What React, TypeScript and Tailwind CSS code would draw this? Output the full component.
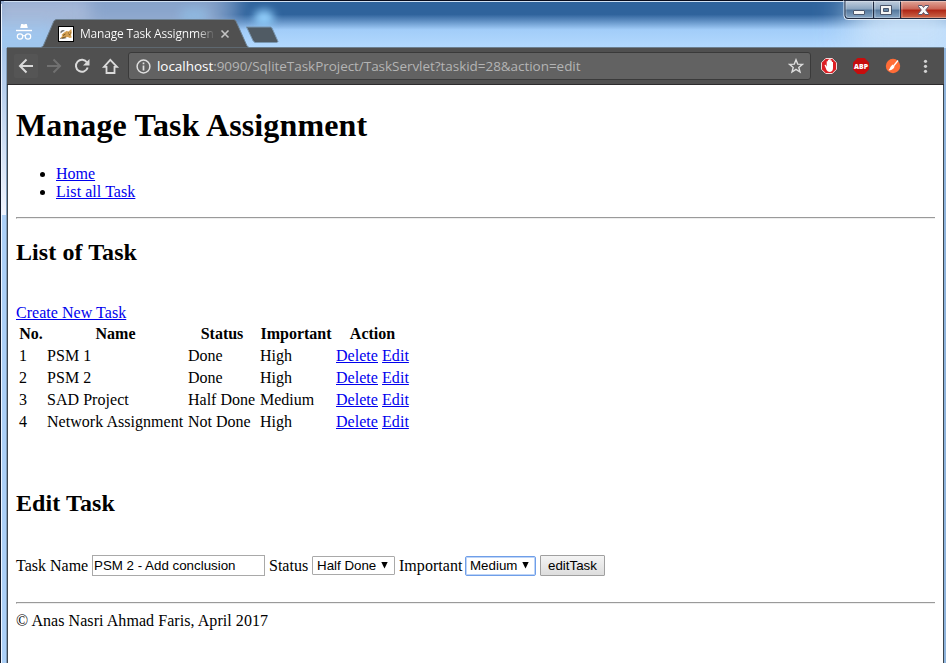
import React from "react";

const tasks = [
  { no: 1, name: "PSM 1", status: "Done", important: "High" },
  { no: 2, name: "PSM 2", status: "Done", important: "High" },
  { no: 3, name: "SAD Project", status: "Half Done", important: "Medium" },
  { no: 4, name: "Network Assignment", status: "Not Done", important: "High" },
];

function Link({ children }: { children: React.ReactNode }) {
  return (
    <a href="#" className="text-[#0000ee] underline decoration-1 underline-offset-1">
      {children}
    </a>
  );
}

function Incognito() {
  return (
    <svg className="mt-[23px] ml-[15px] shrink-0" width="18" height="19" viewBox="0 0 18 19" fill="none" stroke="#fff">
      <path d="M5.2 5 6.2 1h1.5L9 1.500 10.300 1h1.500l1 4z" fill="#fff" stroke="none" />
      <path d="M1 7.500h16" strokeWidth="1.400" />
      <circle cx="5" cy="13.500" r="2.700" strokeWidth="1.200" />
      <circle cx="13" cy="13.500" r="2.700" strokeWidth="1.200" />
      <path d="M7.700 13q1.300-1 2.600 0" strokeWidth="1.100" />
    </svg>
  );
}

function Favicon() {
  return (
    <svg className="absolute left-[17px] top-[7px]" width="16" height="16" viewBox="0 0 16 16">
      <rect x=".5" y=".5" width="15" height="15" fill="#fff" stroke="#000" />
      <path d="M2.500 5.500q1-2 3-1.500l1.500 1-2 .5-2.500 2zM2 12.200h4l3 .8H2z" fill="#777" />
      <path d="m8.500 5 2 .4L13.300 3l.5 3.500-.8 2.500.8 2.500-2 .5-2-1-2.300.4-4 1-1-.9 2-1.500-1-1 2-2z" fill="#d49f50" />
      <path d="M5 9.500 7.500 8M4 12l4-1" stroke="#5c4218" strokeWidth=".8" />
      <path d="M10 7h.8M12 7h.8M10.800 8.700h1.400" stroke="#5c4218" strokeWidth=".8" />
    </svg>
  );
}

function TitleBar() {
  return (
    <div className="relative flex h-12 overflow-hidden bg-linear-to-b from-[#2f639c] from-30% via-[#a2cdf9] via-62% to-[#b3d9fe]">
      <div className="absolute -left-3 -top-3 h-[70px] w-[235px] bg-[#a5b8d8] blur-[10px]" />
      <div className="absolute left-[90px] -top-3 h-9 w-[150px] bg-[#7798c4] opacity-60 blur-[8px]" />
      <div className="absolute -left-4 top-6 h-10 w-[75px] bg-[#9fc6ee] blur-sm" />
      <div className="absolute left-[180px] top-2 h-4 w-7 rounded-full bg-[#8fbbe2] opacity-80 blur-[5px]" />
      <div className="absolute left-[254px] top-[10px] h-4 w-5 rounded-full bg-[#90cdfa] blur-[4px]" />
      <div className="absolute -right-4 -top-2 h-16 w-[110px] bg-[#cfe5fa] opacity-90 blur-[18px]" />
      <div className="absolute inset-x-0 top-0 h-px bg-[#080c1c]" />
      <div className="absolute inset-x-1 top-px h-px bg-[#d0e0f2]" />
      <div className="absolute bottom-0 left-[7px] right-[2px] h-px bg-[#6d8090]" />
      <div className="absolute bottom-0 left-0 top-0 w-px bg-[#10182a]" />
      <div className="absolute bottom-0 left-px top-1 w-px bg-[#eef5ff]" />
      <div className="relative flex">
        <Incognito />
      </div>
      <div className="relative ml-[8px] h-12 w-[207px]">
        <svg className="absolute left-0 top-[19px]" width="238" height="29">
          <path d="M0 28.500 2.200 27 13 1.800 15 .5h178l1.800 1.300L206 27l2 1.500V29H0z" fill="#505050" stroke="#6d8090" />
          <path d="M205 8h24.500l1.500 1 6 13.500-1 1H214l-1.800-1.500L206 9z" fill="#505b64" stroke="#7997b1" />
        </svg>
        <div className="absolute left-0 top-[19px] h-[29px] w-[207px]">
          <Favicon />
          <span className="absolute left-[39px] top-[6px] whitespace-nowrap bg-linear-to-r from-white from-87% to-[#606060] bg-clip-text font-['Open_Sans','Noto_Sans',sans-serif] text-[12px] leading-[18px] tracking-[-0.18px] text-transparent">
            Manage Task Assignmen
          </span>
          <svg className="absolute left-[179px] top-[10px]" width="10" height="10" viewBox="0 0 10 10" stroke="#c4c4c4" strokeWidth="1.600">
            <path d="m1.500 1.500 7 7m0-7-7 7" />
          </svg>
        </div>
      </div>
      <svg className="absolute right-0 top-0" width="103" height="22" viewBox="0 0 103 22">
        <defs>
          <linearGradient id="glass" x2="0" y2="1">
            <stop offset="0" stopColor="#c0cddd" />
            <stop offset=".45" stopColor="#8ba5c0" />
            <stop offset=".5" stopColor="#54779c" />
            <stop offset="1" stopColor="#8eacca" />
          </linearGradient>
          <linearGradient id="close" x2="0" y2="1">
            <stop offset="0" stopColor="#e0a598" />
            <stop offset=".45" stopColor="#ca6556" />
            <stop offset=".5" stopColor="#ae2414" />
            <stop offset="1" stopColor="#d07050" />
          </linearGradient>
        </defs>
        <path d="M1 0v16q0 3.500 3.500 3.500H103" fill="none" stroke="#e4effa" />
        <path d="M2 1h55v18H5q-3 0-3-3z" fill="url(#glass)" />
        <path d="M57 1h46v18H57z" fill="url(#close)" />
        <path d="M2 0v15.500q0 3 3 3H103M30.500 1v17.500M57.500 1v17.500M1 .5h102" fill="none" stroke="#202a40" />
        <path d="M3 1v14q0 2.500 2.500 2.500H29.500V1.500H32v16h24.500V1.500H59v16h44M3 1.500h100" fill="none" stroke="#fff" strokeOpacity=".3" />
        <rect x="10.500" y="10.500" width="11" height="4" rx=".5" fill="#f5f5f5" stroke="#4b566c" />
        <path d="M37.500 5.500h11v9h-11z" fill="#f5f5f5" stroke="#4b566c" />
        <path d="M40.500 8.500h5v3h-5z" fill="#6688a8" stroke="#4b566c" />
        <path d="M75.500 5.500h3.500l1.500 2 1.500-2h3.500v1l-2.800 3.500 2.800 3.500v1H82l-1.500-2-1.500 2h-3.500v-1l2.800-3.500-2.800-3.500z" fill="#f8f8f8" stroke="#59566c" />
      </svg>
    </div>
  );
}

function Toolbar() {
  return (
    <div className="flex h-[37px] items-center border-b border-[#2d2b2d] bg-[#505050]">
      <div className="flex w-[121px] shrink-0">
        <svg width="121" height="36" viewBox="-1 0 121 36" fill="none" stroke="#dadada" strokeWidth="2">
          <rect x="6" y="6" width="24" height="24" rx="2" fill="#555" stroke="none" />
          <path d="M25 18h-12.500M18.500 11.500l-6.500 6.500 6.500 6.500" />
          <path d="M39 18h12.500M45.500 11.500l6.500 6.500-6.500 6.500" stroke="#717171" />
          <path d="M79 14.500a6 6 0 1 0 .7 5" />
          <path d="M81.500 11v6.500H75z" fill="#dadada" stroke="none" />
          <path d="M96 18.800h2.500v6.200h8v-6.200h2.500l-6.700-7z" strokeWidth="1.800" />
        </svg>
      </div>
      <div className="flex h-7 w-[683px] shrink-0 items-center rounded-[3px] border border-[#3a3a3a] bg-[#626262] pl-[6px] pr-[6px]">
        <svg width="17" height="17" viewBox="0 0 17 17" fill="none" stroke="#dedede">
          <circle cx="8.500" cy="8.500" r="6.400" strokeWidth="1.500" />
          <path d="M8.500 7.500v5M8.500 4.500v1.700" strokeWidth="1.700" />
        </svg>
        <div className="ml-[5px] flex-1 whitespace-nowrap font-['Open_Sans','Noto_Sans',sans-serif] text-[13.500px] leading-5 tracking-[-0.045px] text-[#b4b4b4]">
          <span className="text-white">localhost</span>:9090/SqliteTaskProject/TaskServlet?taskid=28&amp;action=edit
        </div>
        <svg width="16" height="16" viewBox="0 0 16 16" fill="none" stroke="#dedede" strokeWidth="1.400">
          <path d="m8 1.800 1.700 4.300 4.700.3-3.600 3 1.200 4.600-4-2.600L4 14l1.200-4.600-3.600-3 4.700-.3z" />
        </svg>
      </div>
      <svg className="ml-[8px] shrink-0" width="117" height="36" viewBox="0 0 117 36">
        <path d="M6.700 10.500h6.600l4.200 4.200v6.600l-4.200 4.200H6.700l-4.200-4.200v-6.600z" fill="#dc1e23" stroke="#f1d8d8" />
        <path d="m5.500 17 1.200-.3 1 2v-5.500h1.200v-1.500h1.400V11h1.300v1.500h1.300V14H14v6q0 3.500-3 4-2.500 0-3.500-2z" fill="#fff" />
        <path d="M38.500 10h7l4.500 4.500v7L45.500 26h-7L34 21.500v-7z" fill="#c70d0d" />
        <text x="42" y="20.800" textAnchor="middle" fill="#fff" fontSize="7.500" fontWeight="800" fontFamily="Open Sans, sans-serif" textLength="14" lengthAdjust="spacingAndGlyphs">ABP</text>
        <circle cx="74" cy="18" r="7.200" fill="#ff6c37" />
        <path d="m79 12.500-4.500 5.500" stroke="#fff" strokeWidth="1.300" />
        <path d="m73.500 16.500 2 2q-.5 3-5.500 4-1.200-.5.500-1.500 1-2.500 3-4.500z" fill="#fff" />
        <g fill="#d2d2d2">
          <circle cx="106.500" cy="13.300" r="1.600" />
          <circle cx="106.500" cy="18.300" r="1.600" />
          <circle cx="106.500" cy="23.300" r="1.600" />
        </g>
      </svg>
    </div>
  );
}

function Rule() {
  return <div className="h-[2px] border-b border-l border-t border-b-[#eeeeee] border-l-[#9a9a9a] border-t-[#9a9a9a]" />;
}

function Arrow() {
  return (
    <svg width="7" height="7" viewBox="0 0 7 7">
      <path d="M.3 0h6.400L3.500 6.500z" />
    </svg>
  );
}

function TaskTable() {
  return (
    <div className="mt-px pl-[2px]">
      <div className="grid h-[22px] grid-cols-[26px_139px_70px_74px_75px] items-center gap-x-[2px] text-center font-bold">
        <span>No.</span>
        <span>Name</span>
        <span>Status</span>
        <span>Important</span>
        <span>Action</span>
      </div>
      {tasks.map((t) => (
        <div key={t.no} className="grid h-[22px] grid-cols-[26px_139px_70px_74px_75px] items-center gap-x-[2px] whitespace-nowrap pl-px">
          <span>{t.no}</span>
          <span className="tracking-[0.04px]">{t.name}</span>
          <span>{t.status}</span>
          <span>{t.important}</span>
          <span className="tracking-[0.04px]">
            <Link>Delete</Link> <Link>Edit</Link>
          </span>
        </div>
      ))}
    </div>
  );
}

function EditForm() {
  return (
    <div className="mt-[38px] flex h-[21px] items-center whitespace-nowrap">
      <span className="w-[76px]">Task Name</span>
      <input
        defaultValue="PSM 2 - Add conclusion"
        className="h-[21px] w-[173px] border border-[#a9a9a9] px-px font-['Liberation_Sans',sans-serif] text-[13.333px] outline-none"
      />
      <span className="ml-[4px] w-[43px]">Status</span>
      <div className="flex h-[19px] w-[83px] items-center justify-between rounded-[1px] border border-[#a9a9a9] pl-[4px] pr-[6px] font-['Liberation_Sans',sans-serif] text-[13.333px]">
        Half Done
        <Arrow />
      </div>
      <span className="ml-[4px] w-[66px] tracking-[0.04px]">Important</span>
      <div className="flex h-[20px] w-[71px] items-center justify-between rounded-[2px] border border-[#6f9ee8] pl-[4px] pr-[6px] font-['Liberation_Sans',sans-serif] text-[13.333px] shadow-[inset_0_0_0_1px_#bdd4f7]">
        Medium
        <Arrow />
      </div>
      <button className="ml-[4px] h-[21px] w-[65px] rounded-[1px] border border-[#a0a0a0] bg-linear-to-b from-[#f4f4f4] to-[#dddddd] font-['Liberation_Sans',sans-serif] text-[13.333px] leading-[18px]">
        editTask
      </button>
    </div>
  );
}

export default function App() {
  return (
    <div className="flex h-[663px] w-[946px] flex-col overflow-hidden bg-[#a9cdf2]">
      <TitleBar />
      <div className="flex min-h-0 flex-1">
        <div className="flex w-[7px] shrink-0">
          <div className="w-px bg-[#10182a]" />
          <div className="w-px bg-[#eef5ff]" />
          <div className="flex flex-1 flex-col">
            <div className="h-[167px] bg-linear-to-b from-[#a6c4e8] to-[#f0f4fd]" />
            <div className="flex-1 bg-[#acd0f7]" />
          </div>
          <div className="w-px bg-[#809cba]" />
        </div>
        <div className="flex w-[937px] shrink-0 flex-col">
          <Toolbar />
          <main className="flex-1 border-x border-[#3c4650] bg-white pl-[8px] pr-[8px] font-['Liberation_Serif',serif] text-[16px] leading-[18px] text-black">
            <h1 className="pt-[22px] text-[32px] font-bold leading-[37px] tracking-[0.12px]">Manage Task Assignment</h1>
            <ul className="mt-[21px] list-disc pl-10">
              <li><Link>Home</Link></li>
              <li className="tracking-[0.06px]"><Link>List all Task</Link></li>
            </ul>
            <div className="mt-4"><Rule /></div>
            <h2 className="mt-5 text-[24px] font-bold leading-[27px] tracking-[0.08px]">List of Task</h2>
            <div className="mt-[38px] tracking-[0.04px]"><Link>Create New Task</Link></div>
            <TaskTable />
            <h2 className="mt-[57px] text-[24px] font-bold leading-[27px] tracking-[0.1px]">Edit Task</h2>
            <EditForm />
            <div className="mt-[26px]"><Rule /></div>
            <footer className="mt-2 tracking-[0.06px]">© Anas Nasri Ahmad Faris, April 2017</footer>
          </main>
        </div>
        <div className="flex-1 bg-[#8fb4dc]" />
      </div>
    </div>
  );
}
